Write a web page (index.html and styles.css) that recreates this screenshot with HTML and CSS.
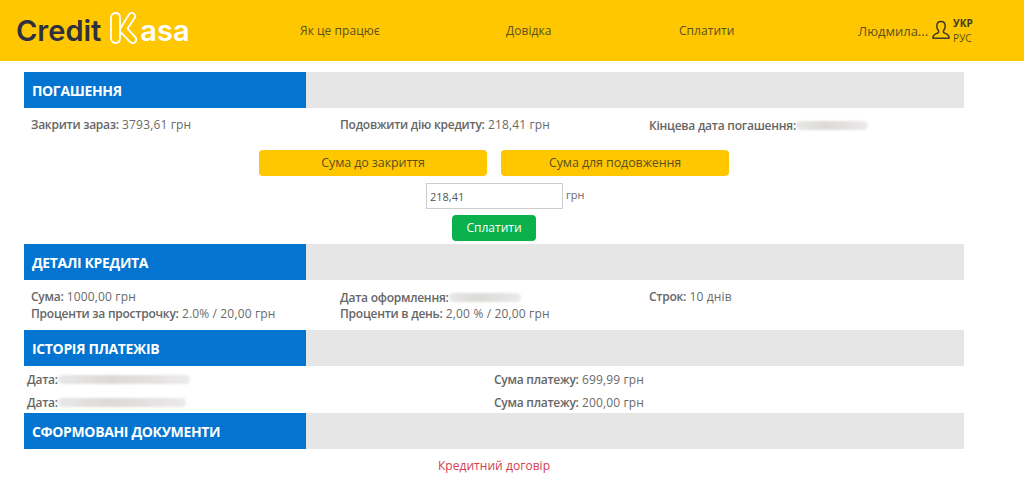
FILE: index.html
```html
<!DOCTYPE html>
<html lang="uk">
<head>
<meta charset="utf-8">
<title>Credit Kasa</title>
<link rel="stylesheet" href="styles.css">
</head>
<body>
<header class="topbar">
  <div class="logo">
    <span class="logo-dark">Credit</span>
    <svg class="logo-k" width="27" height="32" viewBox="0 0 27 32" fill="none" stroke="#fff" stroke-width="1.8" stroke-linejoin="round" stroke-linecap="round">
      <path d="M1 6C1 3 2.8 1 5.5 1S10 3 10 6V26C10 29 8.2 31 5.5 31S1 29 1 26Z"/>
      <path d="M10 17L19 2.6C20 1 22 .6 23.6 1.6S25.6 4.4 24.6 6L17.6 16.6L25.4 25.4C26.6 27 26.4 29 25 30.2S21.4 31.2 20 29.8L10 19.4"/>
    </svg>
    <span class="logo-light">asa</span>
  </div>
  <nav class="nav">
    <a class="nav-link">Як це працює</a>
    <a class="nav-link">Довідка</a>
    <a class="nav-link">Сплатити</a>
  </nav>
  <div class="user">
    <span class="user-name">Людмила...</span>
    <svg class="user-icon" width="18" height="20" viewBox="0 0 18 20" fill="none" stroke="#3f3a2a" stroke-width="1.5" stroke-linejoin="round">
      <path d="M9 1.5C6.3 1.5 4.8 3.4 4.8 6C4.8 8.2 5.6 9.7 6.6 10.9V12.3C5 13.6 1 14 1 17.2V18.3H17V17.2C17 14 13 13.6 11.4 12.3V10.9C12.4 9.7 13.2 8.2 13.2 6C13.2 3.4 11.7 1.5 9 1.5Z"/>
    </svg>
    <div class="langs"><b class="lang-active">УКР</b><span>РУС</span></div>
  </div>
</header>

<main class="page">
  <section class="repay">
    <div class="band"><h2 class="band-title">ПОГАШЕННЯ</h2></div>
    <div class="info-grid first">
      <div><b>Закрити зараз:</b> 3793,61 грн</div>
      <div><b>Подовжити дію кредиту:</b> 218,41 грн</div>
      <div class="with-blur"><b>Кінцева дата погашення:</b><i class="blur w72"></i></div>
    </div>
    <div class="amount-buttons">
      <button class="amount-btn">Сума до закриття</button>
      <button class="amount-btn">Сума для подовження</button>
    </div>
    <div class="amount-row">
      <span class="amount-field">
        <input class="amount-input" value="218,41">
        <span class="currency">грн</span>
      </span>
    </div>
    <div class="pay-row"><button class="pay-btn">Сплатити</button></div>
  </section>

  <section>
    <div class="band"><h2 class="band-title">ДЕТАЛІ КРЕДИТА</h2></div>
    <div class="info-grid details">
      <div><b>Сума:</b> 1000,00 грн</div>
      <div class="with-blur"><b>Дата оформлення:</b><i class="blur w72"></i></div>
      <div><b>Строк:</b> 10 днів</div>
      <div><b>Проценти за прострочку:</b> 2.0% / 20,00 грн</div>
      <div><b>Проценти в день:</b> 2,00 % / 20,00 грн</div>
    </div>
  </section>

  <section>
    <div class="band"><h2 class="band-title">ІСТОРІЯ ПЛАТЕЖІВ</h2></div>
    <div class="history">
      <div class="with-blur"><b>Дата:</b><i class="blur w132"></i></div>
      <div><b>Сума платежу:</b> 699,99 грн</div>
      <div class="with-blur"><b>Дата:</b><i class="blur w128"></i></div>
      <div><b>Сума платежу:</b> 200,00 грн</div>
    </div>
  </section>

  <section>
    <div class="band"><h2 class="band-title">СФОРМОВАНІ ДОКУМЕНТИ</h2></div>
    <a class="doc-link">Кредитний договір</a>
  </section>
</main>
</body>
</html>
```

FILE: styles.css
```css
* { box-sizing: border-box; }
html, body { margin: 0; padding: 0; }
body {
  background: #fff;
  color: #6a6a6a;
  font-family: "Open Sans", "Noto Sans", sans-serif;
  font-size: 12px;
  line-height: 16px;
  letter-spacing: 0.15px;
  height: 504px;
  overflow: hidden;
}
.topbar {
  height: 61px;
  background: #ffc700;
  display: flex;
  align-items: center;
  padding-left: 16px;
  color: #5c5020;
}
.logo {
  width: 284px;
  display: flex;
  align-items: center;
  font-family: "Inter", "Open Sans", sans-serif;
  font-weight: 600;
  font-size: 29px;
  line-height: 30px;
  letter-spacing: 0;
  flex: none;
  padding-top: 1px;
}
.logo-dark { color: #2f3040; }
.logo-k { margin: -6px 3px 0 9px; flex: none; }
.logo-light { color: #fff; }
.nav {
  display: flex;
  width: 508px;
  font-size: 12px;
  letter-spacing: 0.05px;
  flex: none;
}
.nav-link { white-space: nowrap; }
.nav-link:nth-child(1) { width: 206px; }
.nav-link:nth-child(2) { width: 173px; }
.nav-link:nth-child(3) { width: 129px; }
.user {
  display: flex;
  align-items: center;
  margin-left: 50px;
  white-space: nowrap;
}
.user-name { font-size: 13px; letter-spacing: 0; }
.user-icon { margin: -2px 3px 0 4px; }
.langs {
  display: flex;
  flex-direction: column;
  font-size: 10px;
  line-height: 15px;
  letter-spacing: 0;
}
.lang-active { color: #3f3a2a; font-weight: 700; letter-spacing: 0; }
.page { width: 940px; margin: 11px 0 0 24px; }
.band {
  height: 36px;
  background: #e6e6e6;
}
.band-title {
  margin: 0;
  width: 282px;
  height: 36px;
  background: #0375d0;
  color: #fff;
  font-size: 14px;
  line-height: 37px;
  font-weight: 700;
  padding-left: 8px;
  letter-spacing: -0.35px;
}
b { font-weight: 600; color: #666; letter-spacing: -0.25px; }
.info-grid {
  display: grid;
  grid-template-columns: repeat(3, 309px);
  grid-auto-rows: 17px;
  align-content: start;
  padding-left: 7px;
}
.first { padding-top: 9px; height: 42px; }
.details { padding-top: 9px; height: 50px; }
.with-blur { display: flex; align-items: center; }
.blur {
  display: block;
  height: 9px;
  background: linear-gradient(90deg, #e8e8e8, #dcdad8 40%, #eceaea 100%);
  border-radius: 5px;
  filter: blur(1px);
}
.w72 { width: 72px; }
.w132 { width: 132px; }
.w128 { width: 128px; }
.amount-buttons {
  display: flex;
  justify-content: center;
  gap: 14px;
}
.amount-btn {
  width: 228px;
  height: 26px;
  border: 0;
  border-radius: 4px;
  background: #ffc700;
  color: #5c5020;
  font: inherit;
  font-size: 12.5px;
  letter-spacing: -0.1px;
  padding: 0;
}
.amount-row {
  display: flex;
  justify-content: center;
  margin-top: 7px;
}
.amount-field { display: flex; align-items: center; gap: 3px; margin-left: 25px; }
.amount-input {
  width: 137px;
  height: 26px;
  border: 1px solid #cfcbcf;
  padding: 0 3px;
  font: inherit;
  font-size: 11px;
  letter-spacing: 0;
  color: #555;
  background: #fff;
}
.currency { font-size: 11px; width: 21px; margin-top: -3px; letter-spacing: 0; }
.pay-row { display: flex; justify-content: center; margin-top: 6px; }
.pay-btn {
  width: 84px;
  height: 26px;
  border: 0;
  border-radius: 4px;
  background: #0ab14d;
  color: #fff;
  font: inherit;
  letter-spacing: 0;
  padding: 0;
}
.repay { padding-bottom: 3px; }
.history {
  display: grid;
  grid-template-columns: 467px 1fr;
  grid-auto-rows: 23px;
  padding: 2px 0 0 3px;
  height: 47px;
  align-items: center;
}
.doc-link {
  display: block;
  text-align: center;
  color: #d2404f;
  margin-top: 9px;
  font-size: 12px;
  letter-spacing: 0.05px;
}
```
